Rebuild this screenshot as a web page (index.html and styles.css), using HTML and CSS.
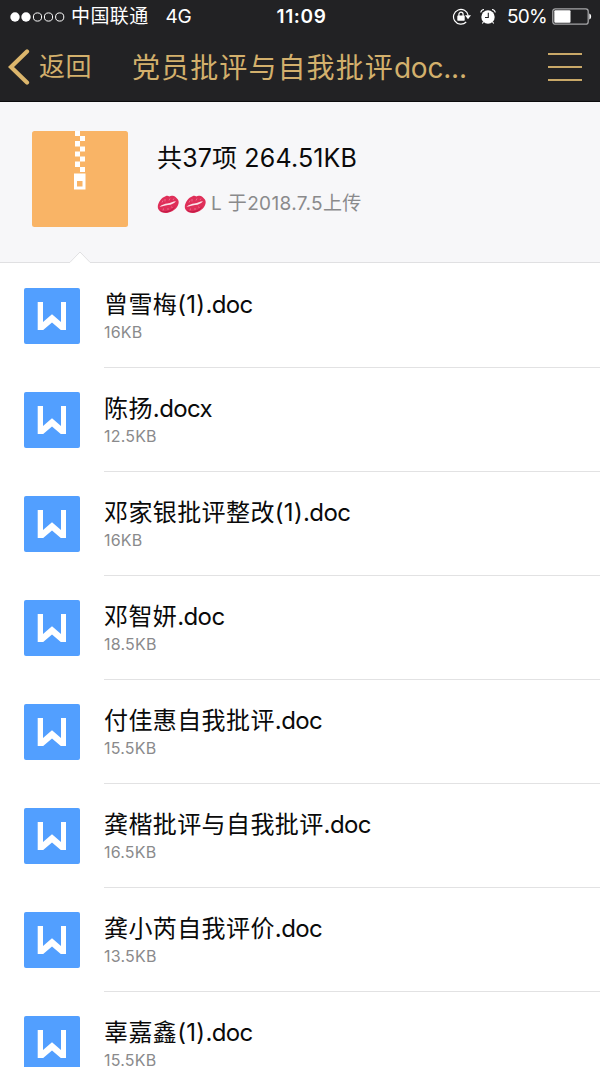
FILE: index.html
```html
<!DOCTYPE html>
<html lang="zh-CN">
<head>
 <meta charset="UTF-8">
 <meta name="viewport" content="width=device-width, initial-scale=1.0">
 <title>党员批评与自我批评doc</title>
 <link rel="stylesheet" href="styles.css">
</head>
<body>
 <svg class="symbols" width="0" height="0">
  <symbol id="word" viewBox="0 0 56 56">
   <rect width="56" height="56" rx="2" fill="#529fff"/>
   <path d="M13.700 14h5.300v20l9-7.800 9 7.800V14h5v28h-5.200L28 34.500 19.200 42h-5.500z" fill="#fff"/>
  </symbol>
  <symbol id="lips" viewBox="0 0 22 19">
   <path d="M.8 12C.8 7.500 4.500 2.500 8.500 1.200c1.700-.6 2.800-.3 3.800.2 2-1 4.700-.6 6.500.9 1.800 1.500 2.900 3 2.900 4.700 0 5-4.700 9.500-10.700 10.700C5.500 18.800.8 16 .8 12z" fill="#df2f59"/>
   <path d="M2.500 14.500c4.500 3 11 2 16-3.500-2 4-5 5.800-8 6.300-4 .5-6.500-.5-8-2.800z" fill="#c41c48"/>
   <path d="M2.500 11.800c3-2.300 5.300-2.800 7.800-3.200 3.700-.5 5.500-2.300 8.700-2.400-1.800 2.200-4.500 3.500-8 3.900-3.700.4-5.500 1.500-8.500 1.700z" fill="#fbe3ea"/>
   <path d="M5 7.500l1-2M8 6.500V4M12 5.500l1-2M16 5l1-1.500M6.500 13.500L6 15.500M11 13v2M14.500 11.500l.8 1.500" stroke="#f27f9d" stroke-width=".7" fill="none"/>
  </symbol>
 </svg>

 <header class="header">
  <div class="status-bar">
   <div class="status-left">
    <svg class="signal" width="56" height="12" viewBox="0 0 56 12" fill="none" stroke="#fff">
     <circle cx="5" cy="6" r="4.700" fill="#fff" stroke="none"/>
     <circle cx="16" cy="6" r="4.700" fill="#fff" stroke="none"/>
     <circle cx="27.500" cy="6" r="4.100"/>
     <circle cx="38.500" cy="6" r="4.100"/>
     <circle cx="49.700" cy="6" r="4.100"/>
    </svg>
    <span class="carrier">中国联通</span>
    <span class="network">4G</span>
   </div>
   <div class="clock">11:09</div>
   <div class="status-right">
    <svg class="lock" width="20" height="18" viewBox="0 0 20 18" fill="none" stroke="#fff" stroke-width="1.200">
     <path d="M14.200 14A7.400 7.400 0 1 1 16.200 7.500"/>
     <path d="M13 7.300h6l-3 3.900z" fill="#fff" stroke="none"/>
     <rect x="5.300" y="7.500" width="7.400" height="5.200" rx=".6" fill="#fff" stroke="none"/>
     <path d="M6.900 8V6.300a2.100 2.100 0 0 1 4.200 0V8"/>
    </svg>
    <svg class="alarm" width="16" height="18" viewBox="0 0 16 18">
     <circle cx="8" cy="9" r="6.700" fill="#fff"/>
     <path d="M.7 4.500C1.100 2.700 2.300 1.700 4 1.500M15.300 4.500c-.4-1.800-1.600-2.800-3.300-3M3.500 13.800L2.300 15.500M12.500 13.800l1.200 1.700" stroke="#fff" stroke-width="1.100" fill="none"/>
     <path d="M8.300 4.800v4.700H5" stroke="#222224" stroke-width="1.100" fill="none"/>
    </svg>
    <span class="percent">50%</span>
    <svg class="battery" width="40" height="17" viewBox="0 0 40 17">
     <rect x=".8" y=".8" width="35.400" height="15.400" rx="2.500" fill="none" stroke="#a5a5a7" stroke-width="1.300"/>
     <rect x="2.300" y="2.300" width="16.200" height="12.400" rx="1" fill="#fff"/>
     <path d="M37.300 5.500c2.400.6 2.400 5.400 0 6z" fill="#fff"/>
    </svg>
   </div>
  </div>
  <nav class="nav-bar">
   <a class="back" href="#">
    <svg width="22" height="36" viewBox="0 0 22 36"><path d="M19 2.500L3 18l16 15.500" fill="none" stroke="#dcb66c" stroke-width="4.200" stroke-linecap="round"/></svg>
    <span>返回</span>
   </a>
   <h1 class="title">党员批评与自我批评<span class="latin">doc...</span></h1>
   <button class="menu" aria-label="菜单"><i></i><i></i><i></i></button>
  </nav>
 </header>

 <section class="summary">
  <svg class="zip" width="96" height="96" viewBox="0 0 96 96">
   <rect width="96" height="96" rx="2.500" fill="#f9b466"/>
   <path d="M43 0h5v5h-5zM48 5h5v5h-5zM43 10h5v5.500h-5zM48 15.500h5v5h-5zM43 20.500h5v5h-5zM48 25.500h5v5h-5zM43 30.500h5v5.500h-5zM48 36h5v5h-5zM42 42.500h11.500v16H42z" fill="#fff"/>
   <rect x="45" y="50" width="5.500" height="5.500" fill="#f9b466"/>
  </svg>
  <div class="summary-info">
   <p class="total">共37项 264.51KB</p>
   <p class="uploader">
    <svg width="22" height="19"><use href="#lips"/></svg>
    <svg width="22" height="19"><use href="#lips"/></svg>
    <span class="uploader-text">L 于2018.7.5上传</span>
   </p>
  </div>
  <svg class="notch" width="22" height="12" viewBox="0 0 22 12"><path d="M1 11L11 1l10 10v1H1z" fill="#fff"/><path d="M0 11.500h.8L11 1l10.200 10.500h.8" fill="none" stroke="#e0e0e2"/></svg>
 </section>

 <ul class="files">
  <li class="file">
   <svg class="file-icon"><use href="#word"/></svg>
   <div class="file-info">
    <p class="name">曾雪梅<span class="number">(1)</span><span class="latin">.doc</span></p>
    <p class="size">16KB</p>
   </div>
  </li>
  <li class="file">
   <svg class="file-icon"><use href="#word"/></svg>
   <div class="file-info">
    <p class="name">陈扬<span class="latin">.docx</span></p>
    <p class="size">12.5KB</p>
   </div>
  </li>
  <li class="file">
   <svg class="file-icon"><use href="#word"/></svg>
   <div class="file-info">
    <p class="name">邓家银批评整改<span class="number">(1)</span><span class="latin">.doc</span></p>
    <p class="size">16KB</p>
   </div>
  </li>
  <li class="file">
   <svg class="file-icon"><use href="#word"/></svg>
   <div class="file-info">
    <p class="name">邓智妍<span class="latin">.doc</span></p>
    <p class="size">18.5KB</p>
   </div>
  </li>
  <li class="file">
   <svg class="file-icon"><use href="#word"/></svg>
   <div class="file-info">
    <p class="name">付佳惠自我批评<span class="latin">.doc</span></p>
    <p class="size">15.5KB</p>
   </div>
  </li>
  <li class="file">
   <svg class="file-icon"><use href="#word"/></svg>
   <div class="file-info">
    <p class="name">龚楷批评与自我批评<span class="latin">.doc</span></p>
    <p class="size">16.5KB</p>
   </div>
  </li>
  <li class="file">
   <svg class="file-icon"><use href="#word"/></svg>
   <div class="file-info">
    <p class="name">龚小芮自我评价<span class="latin">.doc</span></p>
    <p class="size">13.5KB</p>
   </div>
  </li>
  <li class="file">
   <svg class="file-icon"><use href="#word"/></svg>
   <div class="file-info">
    <p class="name">辜嘉鑫<span class="number">(1)</span><span class="latin">.doc</span></p>
    <p class="size">15.5KB</p>
   </div>
  </li>
 </ul>
</body>
</html>
```
FILE: styles.css
```css
* {
 box-sizing: border-box;
}

body {
 margin: 0;
 height: 100vh;
 overflow: hidden;
 background-color: #fff;
 color: #0a0a0a;
 font-family: Inter, "Noto Sans CJK SC", sans-serif;
}

p, h1, ul {
 margin: 0;
 padding: 0;
}

svg {
 display: block;
 flex: none;
}

.symbols {
 position: absolute;
}

.latin {
 letter-spacing: -0.6px;
}

.number {
 letter-spacing: 0.3px;
}

/* ヘッダー */
.header {
 height: 102px;
 background-color: #222224;
 border-bottom: 1px solid #0c0c0d;
}

.status-bar {
 display: grid;
 grid-template-columns: 1fr auto 1fr;
 align-items: center;
 height: 33px;
 padding: 0 8px 0 10px;
 color: #fff;
 font-size: 19px;
 line-height: 33px;
}

.status-left, .status-right {
 display: flex;
 align-items: center;
}

.status-right {
 justify-content: flex-end;
}

.carrier {
 margin-left: 5px;
 letter-spacing: 0.4px;
}

.network {
 margin-left: 17px;
 letter-spacing: -0.3px;
}

.clock {
 padding-left: 1px;
 font-weight: 600;
 letter-spacing: 0.6px;
}

.alarm {
 margin-left: 8px;
}

.percent {
 margin-left: 11px;
 letter-spacing: -0.7px;
}

.battery {
 margin-left: 5px;
}

.nav-bar {
 display: flex;
 align-items: center;
 height: 68px;
 padding: 0 18px 0 8px;
 color: #dcb66c;
}

.back {
 display: flex;
 align-items: center;
 gap: 9px;
 width: 124px;
 color: inherit;
 font-size: 26px;
 line-height: 36px;
 text-decoration: none;
}

.back span {
 color: #d3b06c;
 letter-spacing: 0.4px;
}

.title {
 flex: 1;
 padding-bottom: 2px;
 color: #d3b06c;
 font-size: 28px;
 font-weight: 400;
 letter-spacing: 1.1px;
 white-space: nowrap;
}

.title .latin {
 letter-spacing: -0.2px;
}

.menu {
 display: flex;
 flex-direction: column;
 gap: 11px;
 padding: 0;
 border: none;
 background: none;
}

.menu i {
 width: 34px;
 height: 2px;
 background-color: #c9a868;
}

/* 圧縮ファイルの概要 */
.summary {
 position: relative;
 display: flex;
 height: 161px;
 padding: 29px 32px 0;
 background-color: #f7f7f9;
 border-bottom: 1px solid #e0e0e2;
}

.summary-info {
 padding-left: 29px;
}

.total {
 margin-top: 8px;
 font-size: 25px;
 line-height: 38px;
 letter-spacing: 0.15px;
}

.uploader {
 display: flex;
 align-items: center;
 gap: 5px;
 margin-top: 12px;
 color: #8a8a8c;
 font-size: 19px;
 line-height: 30px;
}

.uploader-text {
 letter-spacing: 0.35px;
}

.notch {
 position: absolute;
 left: 69px;
 bottom: -1px;
}

/* ファイル一覧 */
.files {
 padding-top: 1px;
 list-style: none;
}

.file {
 display: flex;
 height: 104px;
 padding-left: 24px;
}

.file-icon {
 width: 56px;
 height: 56px;
 margin-top: 24px;
}

.file-info {
 flex: 1;
 margin-left: 24px;
 padding-top: 23px;
 border-bottom: 1px solid #e2e2e3;
}

.name {
 font-size: 24px;
 line-height: 36px;
 letter-spacing: 0.4px;
}

.size {
 color: #8a8a8c;
 font-size: 16px;
 line-height: 18px;
 letter-spacing: 0.2px;
}
```
